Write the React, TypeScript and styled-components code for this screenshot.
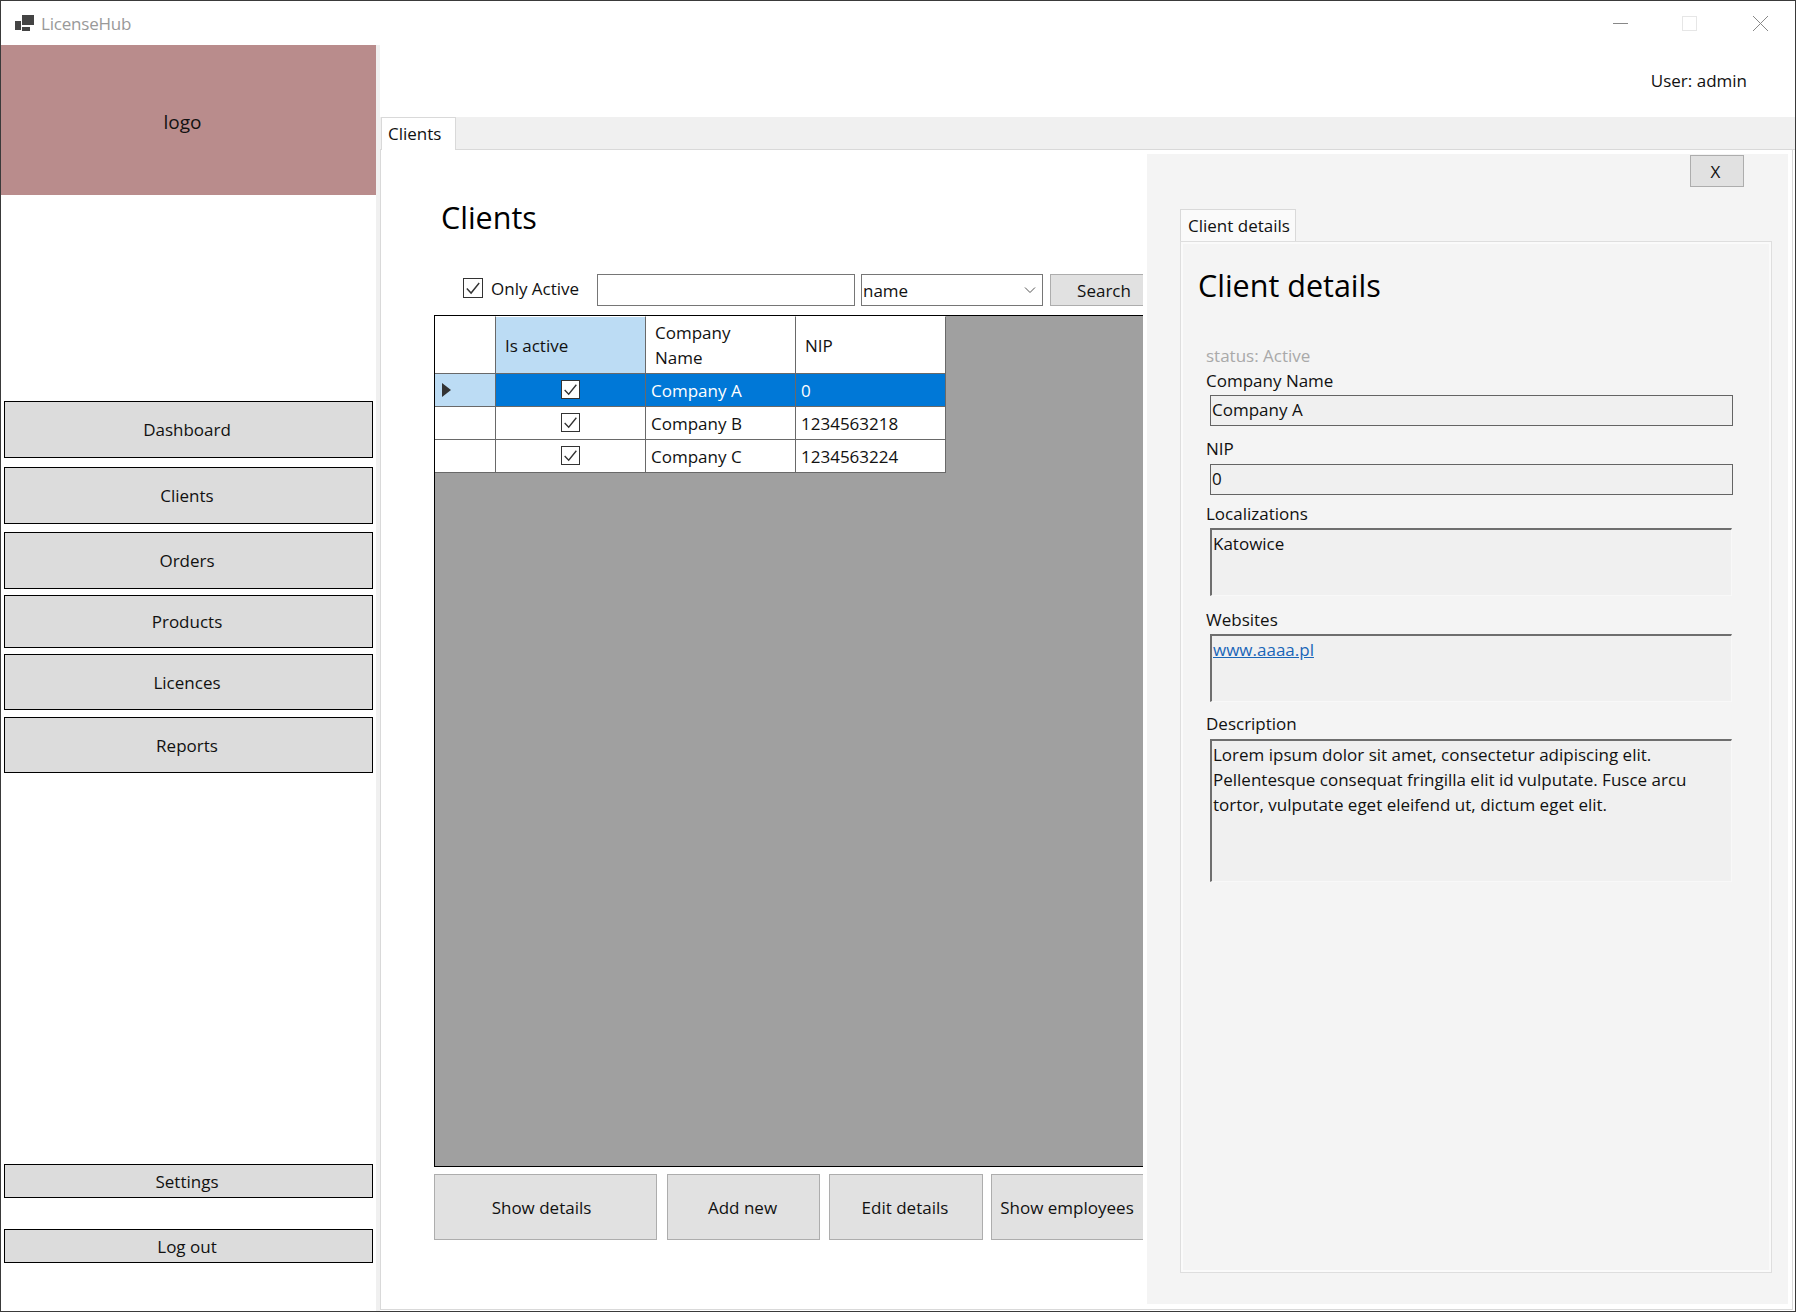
import React from "react";
import styled, { createGlobalStyle } from "styled-components";

const Global = createGlobalStyle`
  html, body { margin: 0; padding: 0; background: #fff; }
  body { font-family: "Open Sans", "Noto Sans", sans-serif; font-size: 17px; color: #111; }
  * { box-sizing: border-box; }
`;

const Window = styled.div`
  width: 1796px; height: 1312px; border: 1px solid #3a3a3a; display: flex; flex-direction: column; background: #fff; overflow: hidden;
`;
const TitleBar = styled.div`
  height: 44px; flex: none; display: flex; align-items: center; padding-left: 14px;
`;
const AppTitle = styled.span`
  margin-left: 7px; color: #999; font-size: 17px; letter-spacing: -0.2px;
`;
const WindowControls = styled.div`
  margin-left: auto; display: flex; align-items: center; padding-right: 27px; gap: 54px;
  svg:last-child { margin-left: 2px; }
`;
const Body = styled.div`
  flex: 1; display: flex; min-height: 0;
`;
const Sidebar = styled.aside`
  width: 375px; flex: none; display: flex; flex-direction: column;
`;
const Logo = styled.div`
  height: 150px; flex: none; background: #b98c8c; display: flex; align-items: center; justify-content: center; padding: 4px 12px 0 0; font-size: 19px;
`;
const SideNav = styled.nav`
  flex: 1; display: flex; flex-direction: column; padding: 0 3px 48px 3px;
`;
const NavButton = styled.button<{ $h: number; $top: number }>`
  height: ${p => p.$h}px; margin-top: ${p => p.$top}px; flex: none; background: #dcdcdc; border: 1px solid #000; font: inherit; color: #111; padding: 0 3px 0 0;
`;
const Gutter = styled.div`
  width: 4px; flex: none; background: #f0f0f0;
`;
const Main = styled.main`
  flex: 1; min-width: 0; display: flex; flex-direction: column;
`;
const TopBar = styled.div`
  height: 72px; flex: none; display: flex; align-items: center; justify-content: flex-end; padding: 0 48px 2px 0;
`;
const TabStrip = styled.div`
  height: 33px; flex: none; background: #f0f0f0; border-bottom: 1px solid #d9d9d9; display: flex;
`;
const Tab = styled.div`
  height: 33px; margin-left: 1px; width: 75px; background: #fff; border: 1px solid #d9d9d9; border-bottom: 0; display: flex; align-items: center; padding: 0 0 2px 6px;
`;
const TabPage = styled.div`
  flex: 1; min-height: 0; display: flex; border: 1px solid #d9d9d9; border-top: 0; margin: 0 2px 1px 0;
`;
const ClientsPane = styled.section`
  width: 762px; flex: none; overflow: hidden; padding-left: 53px; display: flex; flex-direction: column;
`;
const Heading = styled.h1`
  margin: 0; font-size: 30.5px; font-weight: 400; line-height: 42px; color: #000;
`;
const PaneHeading = styled(Heading)`
  margin: 46px 0 0 7px;
`;
const Toolbar = styled.div`
  margin-top: 36px; height: 32px; flex: none; display: flex; align-items: flex-start; width: 720px;
`;
const OnlyActive = styled.label`
  display: flex; align-items: center; gap: 8px; margin: 4px 0 0 29px; width: 134px; flex: none; height: 20px; white-space: nowrap;
`;
const CheckBox = styled.span<{ $size: number }>`
  width: ${p => p.$size}px; height: ${p => p.$size}px; flex: none; background: #fff; border: 1px solid #333; display: flex; align-items: center; justify-content: center;
`;
const SearchInput = styled.input`
  width: 258px; height: 32px; flex: none; border: 1px solid #767676; background: #fff; font: inherit; padding: 0 3px; outline: 0;
`;
const Combo = styled.div`
  width: 182px; height: 32px; flex: none; margin-left: 6px; border: 1px solid #767676; background: #fff; display: flex; align-items: center; padding: 0 6px 0 1px; justify-content: space-between;
`;
const SearchButton = styled.button`
  width: 100px; height: 32px; flex: none; margin-left: 7px; border: 1px solid #adadad; background: #e1e1e1; font: inherit; color: #111; padding: 0 0 0 8px;
`;
const GridView = styled.div`
  margin-top: 9px; width: 720px; height: 852px; flex: none; background: #a0a0a0; border: 1px solid #000; border-right: 0;
`;
const Table = styled.table`
  border-collapse: separate; border-spacing: 0; table-layout: fixed; width: 511px; background: #fff;
`;
const HeadCell = styled.th<{ $w: number; $active?: boolean }>`
  width: ${p => p.$w}px; height: 58px; padding: 0 40px 0 9px; text-align: left; font-weight: 400; line-height: 25px; border-top: 1px solid #fff; border-right: 1px solid #696969; border-bottom: 1px solid #696969; background: ${p => (p.$active ? "#bcdcf4" : "#fff")};
`;
const RowHead = styled.td<{ $sel?: boolean }>`
  height: 33px; padding: 0 0 0 7px; border-right: 1px solid #696969; border-bottom: 1px solid #696969; background: ${p => (p.$sel ? "#bcdcf4" : "#fff")}; line-height: 0;
`;
const Cell = styled.td<{ $sel?: boolean; $center?: boolean }>`
  height: 33px; padding: 0 5px; text-align: ${p => (p.$center ? "center" : "left")}; border-right: 1px solid #696969; border-bottom: 1px solid #696969; background: ${p => (p.$sel ? "#0078d7" : "#fff")}; color: ${p => (p.$sel ? "#fff" : "#111")}; white-space: nowrap;
`;
const CellCheck = styled(CheckBox)`
  display: inline-flex; vertical-align: middle; margin-top: -4px;
`;
const ActionRow = styled.div`
  margin-top: 7px; display: flex; width: 720px; flex: none;
`;
const ActionButton = styled.button<{ $w: number; $gap: number; $shift: number }>`
  width: ${p => p.$w}px; height: 66px; flex: none; margin-left: ${p => p.$gap}px; padding: 0 ${p => p.$shift}px 0 0; border: 1px solid #adadad; background: #e1e1e1; font: inherit; color: #111; white-space: nowrap;
`;
const DetailsPanel = styled.section`
  width: 641px; flex: none; margin: 4px 0 5px 4px; background: #f4f4f4; display: flex; flex-direction: column; padding: 1px 0 0 33px;
`;
const CloseButton = styled.button`
  align-self: flex-end; width: 54px; height: 32px; flex: none; margin-right: 44px; border: 1px solid #adadad; background: #e1e1e1; font: inherit; color: #111; padding: 0 3px 0 0;
`;
const DetailTab = styled.div`
  margin-top: 22px; width: 116px; height: 33px; flex: none; background: #fafafa; border: 1px solid #d9d9d9; border-bottom: 0; display: flex; align-items: center; padding: 0 0 2px 7px; white-space: nowrap; margin-bottom: -1px;
`;
const DetailBody = styled.div`
  width: 592px; height: 1032px; flex: none; border: 1px solid #dedede; box-shadow: inset 0 0 0 2px #fafafa; padding: 22px 0 0 25px;
`;
const DetailHeading = styled(Heading)`
  margin-left: -8px;
`;
const FieldLabel = styled.div<{ $top: number; $muted?: boolean }>`
  height: 24px; line-height: 24px; margin-top: ${p => p.$top}px; color: ${p => (p.$muted ? "#a9a9a9" : "#111")}; white-space: nowrap;
`;
const SingleLine = styled.div<{ $top: number }>`
  width: 523px; height: 31px; margin: ${p => p.$top}px 0 0 4px; background: #f0f0f0; border: 1px solid #646464; line-height: 27px; padding-left: 1px;
`;
const RichBox = styled.div<{ $top: number; $h: number }>`
  width: 522px; height: ${p => p.$h}px; margin: ${p => p.$top}px 0 0 4px; background: #f0f0f0; border-style: solid; border-width: 2px 1px 1px 2px; border-color: #6e6e6e #f8f8f8 #f8f8f8 #6e6e6e; padding: 1px 30px 0 1px; line-height: 25px;
`;
const Link = styled.a`
  color: #1a66b8; text-decoration: underline;
`;

const Check = ({ s }: { s: number }) => (
  <svg width={s} height={s} viewBox="0 0 16 16" fill="none" stroke="#333" strokeWidth="1.25"><path d="M2.5 8.5 6.3 12.5 13.5 3.5" /></svg>
);
const AppIcon = () => (
  <svg width="19" height="16" viewBox="0 0 19 16" fill="#444"><rect x="7" y="0" width="12" height="10" /><rect x="0" y="6" width="6" height="9" /><rect x="7" y="12" width="8" height="4" /></svg>
);
const Chevron = () => (
  <svg width="12" height="8" viewBox="0 0 12 8" fill="none" stroke="#555" strokeWidth="1"><path d="M1 1.5 6 6.5 11 1.5" /></svg>
);
const Arrow = () => (
  <svg width="9" height="14" viewBox="0 0 9 14" fill="#333"><path d="M0 0 9 7 0 14z" /></svg>
);
const Minimize = () => (<svg width="15" height="15" viewBox="0 0 15 15" stroke="#888"><path d="M0 7.5H15" /></svg>);
const Maximize = () => (<svg width="15" height="15" viewBox="0 0 15 15" fill="none" stroke="#e6e6e6"><rect x=".5" y=".5" width="14" height="14" /></svg>);
const CloseX = () => (<svg width="15" height="15" viewBox="0 0 15 15" stroke="#888"><path d="M0 0 15 15M15 0 0 15" /></svg>);

const nav = [
  { label: "Dashboard", h: 57, top: 206 },
  { label: "Clients", h: 57, top: 9 },
  { label: "Orders", h: 57, top: 8 },
  { label: "Products", h: 53, top: 6 },
  { label: "Licences", h: 56, top: 6 },
  { label: "Reports", h: 56, top: 7 },
];
const rows = [
  { name: "Company A", nip: "0", sel: true },
  { name: "Company B", nip: "1234563218" },
  { name: "Company C", nip: "1234563224" },
];
const actions = [
  { label: "Show details", w: 223, gap: 0, shift: 8 },
  { label: "Add new", w: 153, gap: 10, shift: 2 },
  { label: "Edit details", w: 154, gap: 9, shift: 2 },
  { label: "Show employees", w: 154, gap: 8, shift: 2 },
];

export default function App() {
  return (
    <Window>
      <Global />
      <TitleBar>
        <AppIcon />
        <AppTitle>LicenseHub</AppTitle>
        <WindowControls><Minimize /><Maximize /><CloseX /></WindowControls>
      </TitleBar>
      <Body>
        <Sidebar>
          <Logo>logo</Logo>
          <SideNav>
            {nav.map(n => <NavButton key={n.label} $h={n.h} $top={n.top}>{n.label}</NavButton>)}
            <NavButton $h={34} $top={391}>Settings</NavButton>
            <NavButton $h={34} $top={31}>Log out</NavButton>
          </SideNav>
        </Sidebar>
        <Gutter />
        <Main>
          <TopBar>User: admin</TopBar>
          <TabStrip><Tab>Clients</Tab></TabStrip>
          <TabPage>
            <ClientsPane>
              <PaneHeading>Clients</PaneHeading>
              <Toolbar>
                <OnlyActive><CheckBox $size={20}><Check s={18} /></CheckBox>Only Active</OnlyActive>
                <SearchInput readOnly value="" />
                <Combo>name<Chevron /></Combo>
                <SearchButton>Search</SearchButton>
              </Toolbar>
              <GridView>
                <Table>
                  <thead>
                    <tr>
                      <HeadCell $w={61} />
                      <HeadCell $w={150} $active>Is active</HeadCell>
                      <HeadCell $w={150}>Company Name</HeadCell>
                      <HeadCell $w={150}>NIP</HeadCell>
                    </tr>
                  </thead>
                  <tbody>
                    {rows.map(r => (
                      <tr key={r.name}>
                        <RowHead $sel={r.sel}>{r.sel && <Arrow />}</RowHead>
                        <Cell $sel={r.sel} $center><CellCheck $size={19}><Check s={17} /></CellCheck></Cell>
                        <Cell $sel={r.sel}>{r.name}</Cell>
                        <Cell $sel={r.sel}>{r.nip}</Cell>
                      </tr>
                    ))}
                  </tbody>
                </Table>
              </GridView>
              <ActionRow>
                {actions.map(a => <ActionButton key={a.label} $w={a.w} $gap={a.gap} $shift={a.shift}>{a.label}</ActionButton>)}
              </ActionRow>
            </ClientsPane>
            <DetailsPanel>
              <CloseButton>X</CloseButton>
              <DetailTab>Client details</DetailTab>
              <DetailBody>
                <DetailHeading>Client details</DetailHeading>
                <FieldLabel $top={38} $muted>status: Active</FieldLabel>
                <FieldLabel $top={1}>Company Name</FieldLabel>
                <SingleLine $top={2}>Company A</SingleLine>
                <FieldLabel $top={11}>NIP</FieldLabel>
                <SingleLine $top={3}>0</SingleLine>
                <FieldLabel $top={7}>Localizations</FieldLabel>
                <RichBox $top={2} $h={68}>Katowice</RichBox>
                <FieldLabel $top={12}>Websites</FieldLabel>
                <RichBox $top={2} $h={68}><Link>www.aaaa.pl</Link></RichBox>
                <FieldLabel $top={10}>Description</FieldLabel>
                <RichBox $top={3} $h={143}>Lorem ipsum dolor sit amet, consectetur adipiscing elit. Pellentesque consequat fringilla elit id vulputate. Fusce arcu tortor, vulputate eget eleifend ut, dictum eget elit.</RichBox>
              </DetailBody>
            </DetailsPanel>
          </TabPage>
        </Main>
      </Body>
    </Window>
  );
}
